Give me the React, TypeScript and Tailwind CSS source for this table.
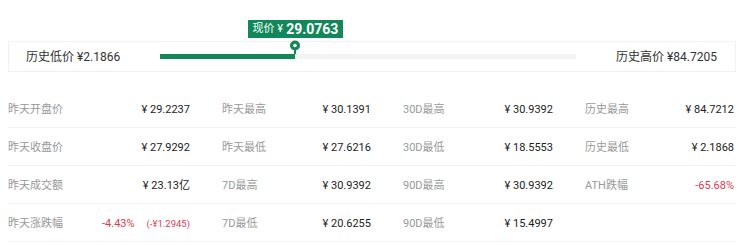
import React from "react";

type Cell = { label: string; value?: React.ReactNode };

const rows: Cell[][] = [
  [
    { label: "昨天开盘价", value: "¥ 29.2237" },
    { label: "昨天最高", value: "¥ 30.1391" },
    { label: "30D最高", value: "¥ 30.9392" },
    { label: "历史最高", value: "¥ 84.7212" },
  ],
  [
    { label: "昨天收盘价", value: "¥ 27.9292" },
    { label: "昨天最低", value: "¥ 27.6216" },
    { label: "30D最低", value: "¥ 18.5553" },
    { label: "历史最低", value: "¥ 2.1868" },
  ],
  [
    { label: "昨天成交额", value: "¥ 23.13亿" },
    { label: "7D最高", value: "¥ 30.9392" },
    { label: "90D最高", value: "¥ 30.9392" },
    { label: "ATH跌幅", value: <span className="text-[#e23a4f]">-65.68%</span> },
  ],
  [
    {
      label: "昨天涨跌幅",
      value: (
        <span className="flex items-baseline gap-[12px] text-[#e23a4f]">
          <span>-4.43%</span>
          <span className="text-[9.5px]">(-¥1.2945)</span>
        </span>
      ),
    },
    { label: "7D最低", value: "¥ 20.6255" },
    { label: "90D最低", value: "¥ 15.4997" },
    { label: "" },
  ],
];

const colCls = [
  "pl-0",
  "pl-[32px]",
  "pl-[32px]",
  "pl-[32px] pr-[2px]",
];

export default function App() {
  return (
    <div
      className="w-[750px] h-[245px] bg-white overflow-hidden"
      style={{ fontFamily: "Roboto, 'Noto Sans CJK SC', sans-serif" }}
    >
      <div className="pt-[41px] px-[8px]">
        <div className="w-[728px] h-[31px] border border-[#f1f1f1] flex items-center pl-[17px] pr-[18px] text-[12px] text-[#333]">
          <div className="w-[134px] whitespace-nowrap">历史低价 ¥2.1866</div>
          <div className="relative w-[416px] h-[5px] bg-[#f3f3f3] flex">
            <div className="w-[135px] h-[5px] bg-[#12875a]" />
            <svg
              className="absolute left-[129px] top-[-14px]"
              width="12"
              height="14"
              viewBox="0 0 12 14"
            >
              <rect x="5" y="8" width="2" height="6" fill="#12875a" />
              <circle cx="6" cy="5.5" r="5" fill="#12875a" />
              <circle cx="6" cy="5.5" r="1.8" fill="#fff" />
            </svg>
            <div className="absolute left-[88px] top-[-34px] w-[95px] h-[18px] bg-[#12875a] text-white flex items-center justify-center whitespace-nowrap">
              <span className="text-[11px] mr-[3px]">现价 ¥</span>
              <span className="text-[14px] font-bold">29.0763</span>
            </div>
          </div>
          <div className="ml-auto whitespace-nowrap">历史高价 ¥84.7205</div>
        </div>
      </div>
      <div className="mx-[8px] w-[728px] mt-[18px]">
        {rows.map((row, i) => (
          <div
            key={i}
            className="grid grid-cols-[182px_181px_182px_183px] h-[38px] pt-[4px] border-b border-[#f2f2f2] text-[11px]"
          >
            {row.map((c, j) => (
              <div
                key={j}
                className={`flex items-center justify-between ${colCls[j]}`}
              >
                <span className="text-[#999]">{c.label}</span>
                <span className="text-[#222]">{c.value}</span>
              </div>
            ))}
          </div>
        ))}
      </div>
    </div>
  );
}
